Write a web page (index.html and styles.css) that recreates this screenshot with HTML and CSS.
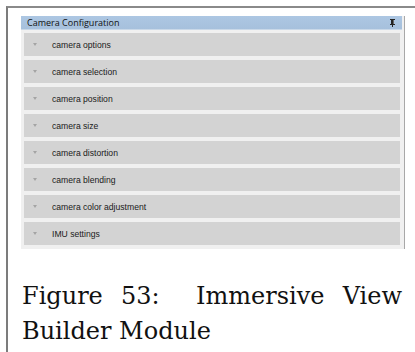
FILE: index.html
```html
<!DOCTYPE html>
<html lang="en">
  <head>
    <meta charset="UTF-8" />
    <meta name="viewport" content="width=device-width, initial-scale=1.0" />
    <title>Camera Configuration</title>
    <link rel="stylesheet" href="styles.css">
  </head>
  <body>
    <div class="frame">
      <div class="panel">
        <div class="panel-header">
          <span>Camera Configuration</span>
          <svg class="pin" width="5" height="8" viewBox="0 0 5 8">
            <rect x="0" y="0" width="5" height="1" fill="#222" />
            <rect x="1" y="1" width="3" height="4" fill="#222" />
            <rect x="3" y="1" width="1" height="4" fill="#666" />
            <rect x="0" y="5" width="5" height="1" fill="#222" />
            <rect x="2" y="6" width="1" height="2" fill="#222" />
          </svg>
        </div>
        <div class="row"><span class="arrow"></span>camera options</div>
        <div class="row"><span class="arrow"></span>camera selection</div>
        <div class="row"><span class="arrow"></span>camera position</div>
        <div class="row"><span class="arrow"></span>camera size</div>
        <div class="row"><span class="arrow"></span>camera distortion</div>
        <div class="row"><span class="arrow"></span>camera blending</div>
        <div class="row"><span class="arrow"></span>camera color adjustment</div>
        <div class="row"><span class="arrow"></span>IMU settings</div>
      </div>
      <p class="caption">Figure 53: &nbsp;Immersive View Builder Module</p>
    </div>
  </body>
</html>
```

FILE: styles.css
```css
html,
body {
  margin: 0;
  background-color: #fff;
  overflow: hidden;
}
.frame {
  margin: 6px 0 0 6px;
  height: 346px;
  border-top: 2px solid #8a8a8a;
  border-left: 2px solid #7c7c7c;
  padding: 8px 0 0 13px;
  box-sizing: border-box;
}
.panel {
  width: 384px;
  background-color: #f0f0f0;
  border-right: 1px solid #a8a8a8;
  padding: 0 4px 4px 3px;
  box-sizing: border-box;
  display: flex;
  flex-direction: column;
  gap: 4px;
}
.panel-header {
  margin: 0 -2px 0 -3px;
  height: 13px;
  padding: 0 7px 0 6px;
  display: flex;
  align-items: center;
  justify-content: space-between;
  background: linear-gradient(#adc7e3, #a6c0dc);
  border-bottom: 1px solid #c9d8e8;
  font-family: "Open Sans", sans-serif;
  font-size: 9px;
  color: #111;
  margin-bottom: -1px;
}
.pin {
  display: block;
}
.row {
  height: 23px;
  display: flex;
  align-items: center;
  background-color: #d3d3d3;
  font-family: "Liberation Sans", Arial, sans-serif;
  font-size: 8.6px;
  color: #1a1a1a;
}
.arrow {
  width: 0;
  height: 0;
  margin: 0 15px 0 9px;
  border-left: 2.5px solid transparent;
  border-right: 2.5px solid transparent;
  border-top: 3px solid #a4a4a4;
}
.caption {
  width: 380px;
  margin: 30px 0 0 1px;
  font-family: "DejaVu Serif", serif;
  font-size: 24px;
  line-height: 35px;
  text-align: justify;
  color: #111;
}
```
